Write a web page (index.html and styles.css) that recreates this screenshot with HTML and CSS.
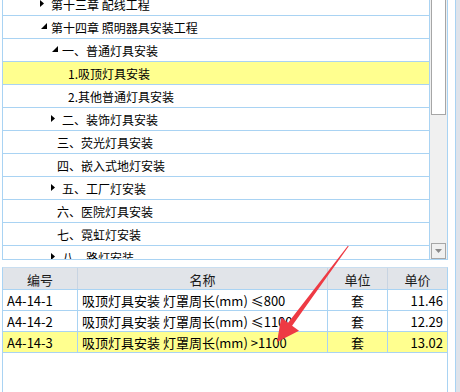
FILE: index.html
```html
<!DOCTYPE html>
<html lang="zh-CN">
<head>
<meta charset="utf-8">
<title>定额</title>
<link rel="stylesheet" href="styles.css">
</head>
<body>
<div class="screen">
  <div class="main">
    <div class="tree-panel">
      <div class="tree">
        <div class="rows">
          <div class="row lv1"><span class="tg"><svg width="5" height="7" viewBox="0 0 5 7"><path d="M0 0L4 3.5L0 7Z"/></svg></span><span class="lbl">第十三章 配线工程</span></div>
          <div class="row lv1"><span class="tg open"><svg width="7" height="7" viewBox="0 0 7 7"><path d="M6 0L6 6L0 6Z"/></svg></span><span class="lbl">第十四章 照明器具安装工程</span></div>
          <div class="row lv2"><span class="tg open"><svg width="7" height="7" viewBox="0 0 7 7"><path d="M6 0L6 6L0 6Z"/></svg></span><span class="lbl">一、普通灯具安装</span></div>
          <div class="row leaf3 selected"><span class="lbl">1.吸顶灯具安装</span></div>
          <div class="row leaf3"><span class="lbl">2.其他普通灯具安装</span></div>
          <div class="row lv2"><span class="tg"><svg width="5" height="7" viewBox="0 0 5 7"><path d="M0 0L4 3.5L0 7Z"/></svg></span><span class="lbl">二、装饰灯具安装</span></div>
          <div class="row leaf2"><span class="lbl">三、荧光灯具安装</span></div>
          <div class="row leaf2"><span class="lbl">四、嵌入式地灯安装</span></div>
          <div class="row lv2"><span class="tg"><svg width="5" height="7" viewBox="0 0 5 7"><path d="M0 0L4 3.5L0 7Z"/></svg></span><span class="lbl">五、工厂灯安装</span></div>
          <div class="row leaf2"><span class="lbl">六、医院灯具安装</span></div>
          <div class="row leaf2"><span class="lbl">七、霓虹灯安装</span></div>
          <div class="row lv2"><span class="tg"><svg width="5" height="7" viewBox="0 0 5 7"><path d="M0 0L4 3.5L0 7Z"/></svg></span><span class="lbl">八、路灯安装</span></div>
        </div>
      </div>
      <div class="vscroll">
        <div class="thumb"></div>
        <div class="track"></div>
        <div class="btn-down"><svg width="7" height="4" viewBox="0 0 7 4"><path d="M0 0L7 0L3.5 4Z"/></svg></div>
      </div>
    </div>
    <div class="grid-panel">
      <div class="grow head">
        <div class="c c-code">编号</div>
        <div class="c c-name">名称</div>
        <div class="c c-unit">单位</div>
        <div class="c c-price">单价</div>
      </div>
      <div class="grow">
        <div class="c c-code">A4-14-1</div>
        <div class="c c-name">吸顶灯具安装 灯罩周长(mm) ≤800</div>
        <div class="c c-unit">套</div>
        <div class="c c-price">11.46</div>
      </div>
      <div class="grow">
        <div class="c c-code">A4-14-2</div>
        <div class="c c-name">吸顶灯具安装 灯罩周长(mm) ≤1100</div>
        <div class="c c-unit">套</div>
        <div class="c c-price">12.29</div>
      </div>
      <div class="grow selected">
        <div class="c c-code">A4-14-3</div>
        <div class="c c-name">吸顶灯具安装 灯罩周长(mm) &gt;1100</div>
        <div class="c c-unit">套</div>
        <div class="c c-price">13.02</div>
      </div>
    </div>
  </div>
  <div class="side"></div>
  <svg class="callout" width="460" height="392" viewBox="0 0 460 392">
    <polygon points="347.9,245.7 288.1,322.7 281.2,317.6 277,342 299,330.8 292.1,325.7 348.7,246.3"/>
  </svg>
</div>
</body>
</html>
```

FILE: styles.css
```css
html, body {
  margin: 0;
  padding: 0;
  background: #fff;
}

.screen {
  position: relative;
  width: 460px;
  height: 392px;
  overflow: hidden;
  display: flex;
  font-family: "Noto Sans CJK SC", "Noto Sans", sans-serif;
  color: #000;
}

.main {
  width: 455px;
  display: flex;
  flex-direction: column;
}

/* ---------- tree ---------- */
.tree-panel {
  margin-left: 2px;
  width: 446px;
  height: 260px;
  box-sizing: border-box;
  border-left: 1px solid #a9d3f3;
  border-right: 1px solid #a9d3f3;
  border-bottom: 1px solid #a9d3f3;
  display: flex;
}

.tree {
  flex: 1;
  overflow: hidden;
  border-right: 1px solid #a9d3f3;
}

.rows {
  margin-top: -7px;
}

.row {
  height: 23px;
  box-sizing: border-box;
  border-bottom: 1px solid #a9d3f3;
  display: flex;
  align-items: center;
  padding-top: 2px;
  font-size: 12px;
  line-height: 16px;
  white-space: nowrap;
}

.row.selected {
  background: #ffff8f;
}

.lv1 { padding-left: 37px; }
.lv2 { padding-left: 48px; }
.leaf2 { padding-left: 54px; }
.leaf3 { padding-left: 65px; }

.tg {
  width: 11px;
  height: 8px;
  display: flex;
  align-items: center;
  margin-top: -3px;
}

.tg svg {
  display: block;
  fill: #000;
}

.tg.open svg {
  margin-left: 1px;
}

/* ---------- scrollbar ---------- */
.vscroll {
  width: 17px;
  background: #f0f0f0;
  display: flex;
  flex-direction: column;
  align-items: center;
}

.thumb {
  width: 15px;
  height: 116px;
  margin-top: -1px;
  box-sizing: border-box;
  border: 1px solid #a6a6a6;
  background: #fff;
}

.track {
  flex: 1;
}

.btn-down {
  width: 15px;
  height: 16px;
  box-sizing: border-box;
  border: 1px solid #a6a6a6;
  background: #f0f0f0;
  display: flex;
  align-items: center;
  justify-content: center;
}

.btn-down svg {
  display: block;
  fill: #8a8a8a;
}

/* ---------- grid ---------- */
.grid-panel {
  margin-top: 7px;
  margin-left: 2px;
  width: 446px;
  flex: 1;
  box-sizing: border-box;
  border-left: 1px solid #a9d3f3;
  border-right: 1px solid #a9d3f3;
  border-top: 1px solid #c9def0;
}

.grow {
  display: grid;
  grid-template-columns: 75px 250px 60px 59px;
  height: 21px;
  box-sizing: border-box;
  border-bottom: 1px solid #a9d3f3;
  font-size: 13px;
  line-height: 20px;
}

.grow.head {
  height: 22px;
  background: #e1e4e9;
  line-height: 21px;
  color: #1a1a1a;
}

.grow.selected {
  background: #ffff8f;
}

.c {
  box-sizing: border-box;
  border-right: 1px solid #a9d3f3;
  white-space: nowrap;
  overflow: hidden;
  padding-top: 1px;
}

.head .c {
  border-right-color: #c8d4e2;
  text-align: center;
}

.c.c-price {
  border-right: none;
}

.c-code { padding-left: 4px; }
.c-name { padding-left: 4px; }
.c-unit { text-align: center; }
.c-price { text-align: right; padding-right: 4px; }

.head .c-code, .head .c-name, .head .c-price {
  padding-left: 0;
  padding-right: 0;
  text-align: center;
}

/* ---------- right strip ---------- */
.side {
  flex: 1;
  border-left: 1px solid #a9d3f3;
  background: #dfe3ea;
}

/* ---------- callout arrow ---------- */
.callout {
  position: absolute;
  left: 0;
  top: 0;
  pointer-events: none;
}

.callout polygon {
  fill: #ee3a44;
}
```
